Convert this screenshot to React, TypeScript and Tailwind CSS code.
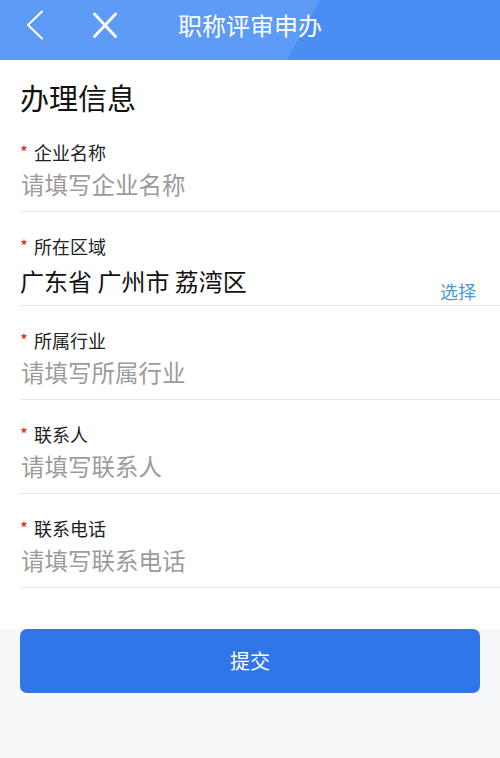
import React from "react";

const fields = [
  { label: "企业名称", placeholder: "请填写企业名称" },
  { label: "所在区域", value: "广东省 广州市 荔湾区" },
  { label: "所属行业", placeholder: "请填写所属行业" },
  { label: "联系人", placeholder: "请填写联系人" },
  { label: "联系电话", placeholder: "请填写联系电话" },
];

function BackIcon() {
  return (
    <svg width="18" height="30" viewBox="0 0 18 30" fill="none">
      <polyline
        points="16,1.5 2,15 16,28.5"
        stroke="white"
        strokeWidth="2"
        strokeLinecap="round"
        strokeLinejoin="round"
      />
    </svg>
  );
}

function CloseIcon() {
  return (
    <svg width="26" height="26" viewBox="0 0 26 26" fill="none">
      <path
        d="M2.5 2 L23.5 24.5 M23.5 2 L2.5 24.5"
        stroke="white"
        strokeWidth="2.8"
        strokeLinecap="round"
      />
    </svg>
  );
}

export default function App() {
  return (
    <div className="min-h-[758px] bg-[#f7f8f9] font-['Noto_Sans_CJK_SC','Noto_Sans',sans-serif]">
      <header className="h-[60px] bg-[linear-gradient(119deg,#5e9bf6_60%,#4b8ef3_60%)]">
        <div className="grid h-[50px] grid-cols-[1fr_auto_1fr] items-center">
          <div className="flex items-center gap-[48px] pl-[26px]">
            <BackIcon />
            <CloseIcon />
          </div>
          <h1 className="text-[24px] leading-[30px] text-white">职称评审申办</h1>
          <div />
        </div>
      </header>

      <section className="bg-white pb-[41px] pl-5 pt-[19px]">
        <h2 className="mb-[3px] text-[29px] leading-[36px] text-[#111]">办理信息</h2>
        {fields.map((field) => (
          <div
            key={field.label}
            className="border-b border-[#e6e6e6] pt-[22px]"
          >
            <div className="flex h-[24px] items-center text-[18px] leading-[24px] text-[#222]">
              <span className="w-[14px] text-[17px] leading-[24px] text-[#e3241b]">*</span>
              {field.label}
            </div>
            {field.value ? (
              <div className="mb-[9px] mt-[8px] flex h-[30px] items-end justify-between pr-[24px]">
                <span className="text-[24px] leading-[30px] text-[#111]">{field.value}</span>
                <span className="-mb-[5px] text-[18px] leading-[20px] text-[#4a9ad8]">选择</span>
              </div>
            ) : (
              <div className="mb-[12px] mt-[5px] h-[30px] pl-[1px] text-[23.5px] leading-[30px] text-[#9b9b9b]">
                {field.placeholder}
              </div>
            )}
          </div>
        ))}
      </section>

      <div className="px-5">
        <button className="h-[64px] w-full rounded-[7px] bg-[#3176e9] text-[20px] text-white">
          提交
        </button>
      </div>
    </div>
  );
}
